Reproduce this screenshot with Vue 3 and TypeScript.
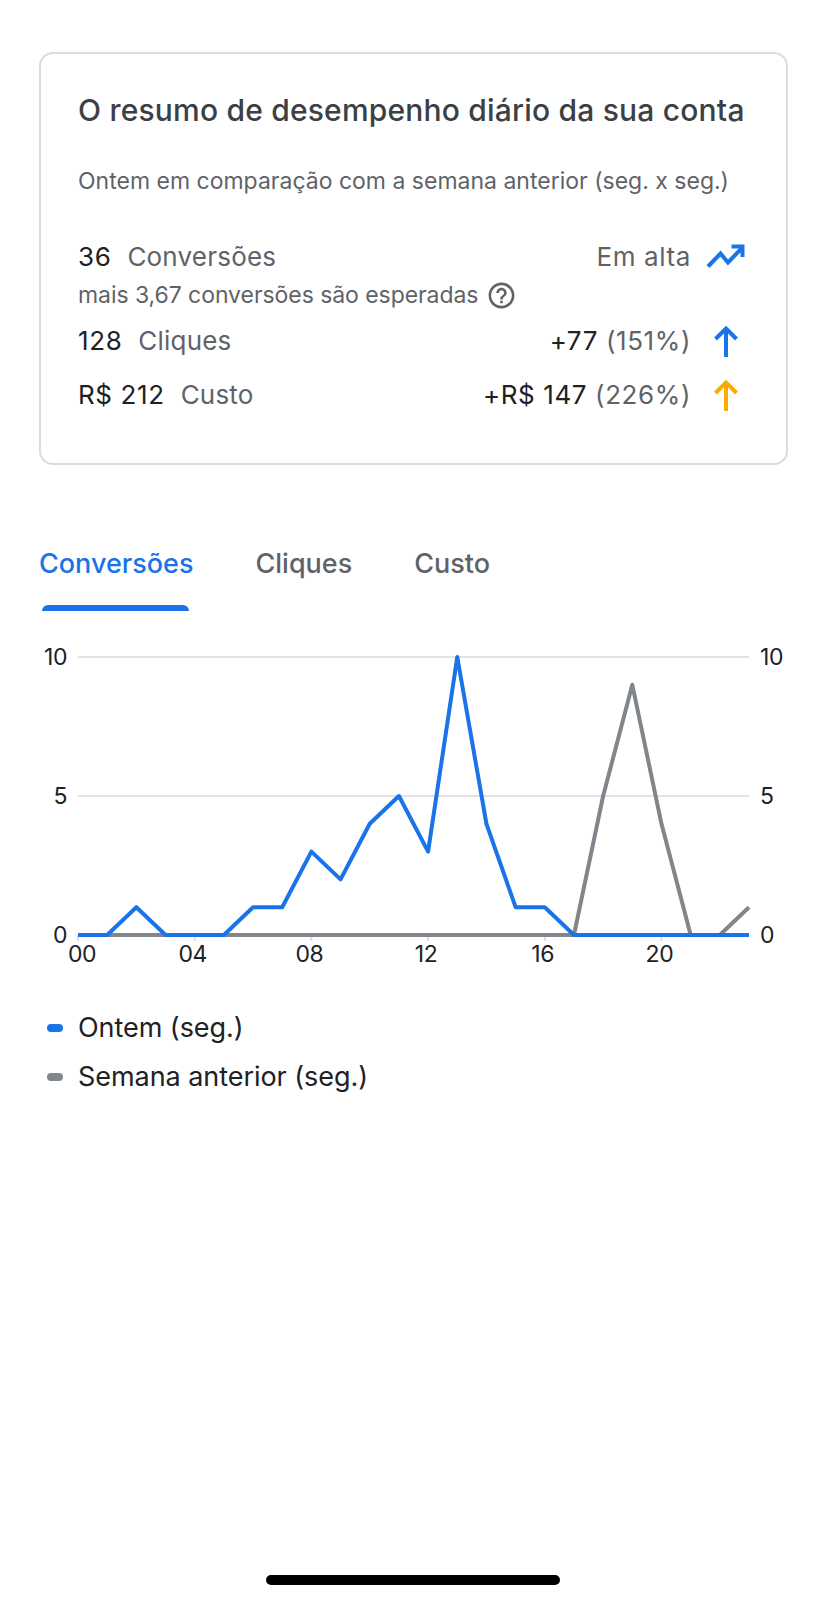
<template>
  <div class="page">
    <section class="card">
      <h1 class="title">O resumo de desempenho diário da sua conta</h1>
      <p class="subtitle">Ontem em comparação com a semana anterior (seg. x seg.)</p>

      <div class="row row-first">
        <div class="left"><span class="value">36</span><span class="label">Conversões</span></div>
        <div class="right">
          <span class="label">Em alta</span>
          <svg class="icon" viewBox="0 0 40 40" fill="none" stroke="#1a73e8" stroke-width="4">
            <path d="M3 30.5L15.5 17.5L23 26.5L37 12" />
            <path d="M26.5 10.5H37.5V21" />
          </svg>
        </div>
      </div>
      <div class="hint">
        <span>mais 3,67 conversões são esperadas</span>
        <svg class="help" viewBox="0 0 24 24" fill="#5f6368">
          <path d="M11 18h2v-2h-2v2zm1-16C6.48 2 2 6.48 2 12s4.48 10 10 10 10-4.48 10-10S17.52 2 12 2zm0 18c-4.41 0-8-3.59-8-8s3.59-8 8-8 8 3.59 8 8-3.59 8-8 8zm0-14c-2.21 0-4 1.79-4 4h2c0-1.1.9-2 2-2s2 .9 2 2c0 2-3 1.75-3 5h2c0-2.25 3-2.5 3-5 0-2.21-1.79-4-4-4z" />
        </svg>
      </div>

      <div v-for="m in metrics" :key="m.label" class="row" :class="m.cls">
        <div class="left"><span class="value">{{ m.value }}</span><span class="label">{{ m.label }}</span></div>
        <div class="right">
          <span class="delta">{{ m.delta }} <span class="label">{{ m.pct }}</span></span>
          <svg class="icon" viewBox="0 0 40 40" fill="none" :stroke="m.color" stroke-width="4">
            <path d="M21 37V8" />
            <path d="M10.5 19L21 8.5L31.5 19" />
          </svg>
        </div>
      </div>
    </section>

    <nav class="tabs">
      <div v-for="(t, i) in tabs" :key="t" class="tab" :class="{ active: i === 0 }">{{ t }}</div>
    </nav>

    <svg class="chart" width="826" height="340" viewBox="0 0 826 340">
      <line v-for="g in [10, 5]" :key="g" :x1="plotLeft" :x2="plotRight" :y1="yOf(g)" :y2="yOf(g)" stroke="#e0e2e5" stroke-width="2" />
      <line v-for="t in ticks" :key="'t' + t" :x1="xOf(t)" :x2="xOf(t)" :y1="yOf(0)" :y2="yOf(0) + 6" stroke="#dadce0" stroke-width="2" />

      <text v-for="g in [10, 5, 0]" :key="'l' + g" class="axis" :x="67" :y="yOf(g) + 8" text-anchor="end">{{ g }}</text>
      <text v-for="g in [10, 5, 0]" :key="'r' + g" class="axis" :x="760" :y="yOf(g) + 8">{{ g }}</text>
      <text v-for="t in ticks" :key="'x' + t" class="axis" :x="xOf(t) + (t === 0 ? 4 : -2)" :y="yOf(0) + 27" text-anchor="middle">{{ String(t).padStart(2, "0") }}</text>

      <polyline :points="toPoints(lastWeek)" fill="none" stroke="#80868b" stroke-width="4" stroke-linejoin="round" />
      <polyline :points="toPoints(yesterday)" fill="none" stroke="#1a73e8" stroke-width="4" stroke-linejoin="round" />
    </svg>

    <ul class="legend">
      <li><i class="dot blue"></i>Ontem (seg.)</li>
      <li><i class="dot gray"></i>Semana anterior (seg.)</li>
    </ul>

    <div class="home-bar"></div>
  </div>
</template>

<script setup lang="ts">
  const metrics = [
    { value: "128", label: "Cliques", delta: "+77", pct: "(151%)", color: "#1a73e8", cls: "row-clicks" },
    { value: "R$ 212", label: "Custo", delta: "+R$ 147", pct: "(226%)", color: "#f9ab00", cls: "row-cost" },
  ];

  const tabs = ["Conversões", "Cliques", "Custo"];

  const yesterday = [0, 0, 1, 0, 0, 0, 1, 1, 3, 2, 4, 5, 3, 10, 4, 1, 1, 0, 0, 0, 0, 0, 0, 0];
  const lastWeek = [0, 0, 0, 0, 0, 0, 0, 0, 0, 0, 0, 0, 0, 0, 0, 0, 0, 0, 5, 9, 4, 0, 0, 1];
  const ticks = [0, 4, 8, 12, 16, 20];

  const plotLeft = 78;
  const plotRight = 749;
  const plotTop = 27;
  const plotBottom = 305;

  const xOf = (hour: number) => plotLeft + (hour * (plotRight - plotLeft)) / 23;
  const yOf = (v: number) => plotBottom - (v * (plotBottom - plotTop)) / 10;
  const toPoints = (values: number[]) => values.map((v, i) => `${xOf(i)},${yOf(v)}`).join(" ");
</script>

<style scoped>
  .page {
    display: flex;
    flex-direction: column;
    min-height: 1600px;
    box-sizing: border-box;
    padding-top: 52px;
    font-family: Inter, "Liberation Sans", sans-serif;
    color: #202124;
    overflow: hidden;
  }

  .card {
    box-sizing: border-box;
    width: 749px;
    height: 413px;
    margin-left: 39px;
    padding: 0 41px 0 37px;
    border: 2px solid #dadce0;
    border-radius: 14px;
  }

  .title {
    margin: 37px 0 0;
    font-size: 30px;
    line-height: 38px;
    font-weight: 500;
    letter-spacing: 0.2px;
    color: #3c4043;
    white-space: nowrap;
  }

  .subtitle {
    margin: 37px 0 0;
    font-size: 23px;
    line-height: 30px;
    color: #5f6368;
    white-space: nowrap;
  }

  .row {
    display: flex;
    justify-content: space-between;
    align-items: center;
    height: 40px;
    font-size: 26px;
    letter-spacing: 0.2px;
  }

  .row-first { margin-top: 40px; }
  .row-clicks { margin-top: 7px; }
  .row-cost { margin-top: 14px; }

  .left { display: flex; gap: 16px; }

  .value { letter-spacing: 0.6px; }

  .right {
    display: flex;
    align-items: center;
    gap: 14px;
    letter-spacing: 0.6px;
  }

  .label { color: #5f6368; }

  .icon { width: 40px; height: 40px; }

  .hint {
    display: flex;
    align-items: center;
    gap: 8px;
    height: 36px;
    margin-top: 1px;
    font-size: 23px;
    letter-spacing: -0.06px;
    color: #5f6368;
  }

  .help { width: 31px; height: 31px; }

  .tabs {
    display: flex;
    gap: 62px;
    margin: 81px 0 0 39px;
  }

  .tab {
    position: relative;
    height: 65px;
    font-size: 27px;
    line-height: 36px;
    font-weight: 500;
    color: #5f6368;
  }

  .tab.active { color: #1a73e8; }

  .tab.active::after {
    content: "";
    position: absolute;
    left: 3px;
    right: 5px;
    bottom: 0;
    height: 6px;
    background: #1a73e8;
    border-radius: 6px 6px 0 0;
  }

  .chart { display: block; margin-top: 19px; }

  .axis {
    font-size: 23px;
    letter-spacing: -0.4px;
    fill: #202124;
  }

  .legend {
    list-style: none;
    margin: 33px 0 0;
    padding: 0;
    font-size: 27px;
    letter-spacing: -0.05px;
    color: #202124;
  }

  .legend li {
    display: flex;
    align-items: center;
    height: 49px;
    padding-left: 47px;
  }

  .dot {
    width: 16px;
    height: 8px;
    margin-right: 15px;
    border-radius: 4px;
  }

  .blue { background: #1a73e8; }
  .gray { background: #80868b; }

  .home-bar {
    width: 294px;
    height: 10px;
    margin: auto auto 15px;
    border-radius: 5px;
    background: #000;
  }
</style>
